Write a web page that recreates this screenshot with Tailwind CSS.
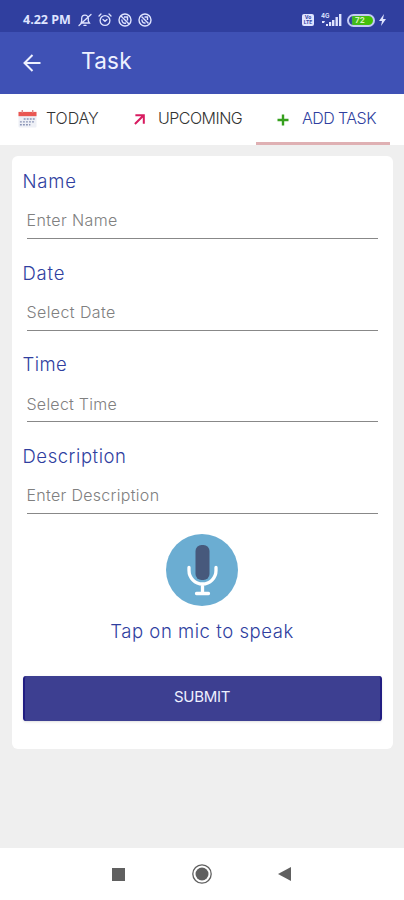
<!DOCTYPE html>
<html lang="en">
<head>
    <meta charset="UTF-8">
    <meta name="viewport" content="width=device-width, initial-scale=1.0">
    <title>Task</title>
    <script src="https://cdn.jsdelivr.net/npm/@tailwindcss/browser@4"></script>
</head>
<body class="bg-[#efefef] h-[900px] flex flex-col overflow-hidden font-['Inter',sans-serif]">

    <!-- Status Bar -->
    <div class="h-8 shrink-0 bg-[#303f9f] pt-2 pl-[23px] pr-[18px] flex items-center justify-between text-[#dfe4ff]">
        <div class="flex items-center gap-[6px]">
            <span class="text-[12.5px] leading-6 font-bold font-['Open_Sans',sans-serif] w-[49px] whitespace-nowrap">4.22 PM</span>
            <svg class="w-[14px] h-[14px]" viewBox="0 0 14 14" fill="none" stroke="currentColor" stroke-width="1.3" stroke-linecap="round">
                <path d="M3 10h8.500l-1.200-2V5.500a3.300 3.300 0 0 0-6.600 0V8zM6 12.400h2M1 12.500L13 1.500"/>
            </svg>
            <svg class="w-[14px] h-[14px]" viewBox="0 0 14 14" fill="none" stroke="currentColor" stroke-width="1.3" stroke-linecap="round">
                <circle cx="7" cy="7.500" r="4.900"/>
                <path d="M1 3l2-2M13 3l-2-2M5 6.500l2 1.800 2-1.800"/>
            </svg>
            <svg class="w-[14px] h-[14px]" viewBox="0 0 14 14" fill="none" stroke="currentColor" stroke-width="1.400">
                <circle cx="7" cy="7" r="6"/>
                <path d="M3 3l8 8M4 6.500a3 3 0 0 0 4 3.500M6 4h3.500v3.500"/>
            </svg>
            <svg class="w-[14px] h-[14px]" viewBox="0 0 14 14" fill="none" stroke="currentColor" stroke-width="1.400">
                <circle cx="7" cy="7" r="6"/>
                <path d="M3.500 3.500l7 7M4 6.500a3 3 0 0 0 3.500 3.500M6.500 4h3v3"/>
            </svg>
        </div>
        <div class="flex items-center">
            <div class="w-3 h-3 mr-[7px] rounded-[2px] bg-[#dfe4ff] text-[#303f9f] text-[5px] leading-[5px] font-bold text-center pt-px">Vo<br>LTE</div>
            <svg class="w-[21px] h-[14px] mr-[5px]" viewBox="0 0 21 14" fill="currentColor">
                <text x="0" y="5" font-size="6" font-weight="700">4G</text>
                <path d="M1 8h3l-1 2H1zM5 11h2v2H5zM8 9h2.200v4H8zM11 7h2.400v6H11zM14.500 4h2.400v9h-2.400zM18 1h2.400v12H18z"/>
            </svg>
            <div class="w-7 h-[13px] mr-[4px] rounded-full border-2 border-[#c3cbf4] bg-gradient-to-r from-[#303f9f] from-10% via-[#43b81b] via-15% to-[#43c400] text-[#d5f5b8] text-[8px] leading-[9px] font-bold pl-[6px]">72</div>
            <svg class="w-[7px] h-[12px]" viewBox="0 0 7 12" fill="currentColor"><path d="M5 0L0 7h3L2 12l5-7H4z"/></svg>
        </div>
    </div>

    <!-- App Bar -->
    <div class="h-[62px] shrink-0 bg-[#3f51b5] pl-[23px] flex items-center text-[#eef1ff]">
        <svg class="w-[18px] h-[18px]" viewBox="0 0 18 18" fill="none" stroke="currentColor" stroke-width="2">
            <path d="M17.500 9H1.500M9.500 1L1.500 9l8 8"/>
        </svg>
        <h1 class="ml-10 -mt-[5px] text-[22.5px] leading-8 tracking-[0.3px]">Task</h1>
    </div>

    <!-- Tabs -->
    <div class="h-[51px] shrink-0 bg-white flex text-[16px] leading-6 font-light text-[#333]">
        <div class="w-[116px] pl-[18px] pt-3 flex">
            <svg class="w-[19px] h-[18px] mt-[4px]" viewBox="0 0 20 19">
                <rect x=".5" y="2" width="19" height="16.500" rx="1" fill="#eef0f6"/>
                <path d="M.5 2h19v4.500H.5z" fill="#ea5752"/>
                <path d="M4.500 0v3M15.500 0v3" stroke="#e08a88" stroke-width="1.500"/>
                <path d="M6 9.500h12M2 12.500h16M2 15.500h11" stroke="#8b95b7" stroke-width="1.500" stroke-dasharray="2 1.200"/>
            </svg>
            <span class="ml-[9px] w-[54px] whitespace-nowrap tracking-[-0.1px]">TODAY</span>
        </div>
        <div class="w-[140px] pl-[18px] pt-3 flex">
            <svg class="w-[11px] h-[11px] mt-[8px]" viewBox="0 0 12 12" fill="none" stroke="#d81b60" stroke-width="2.200">
                <path d="M1 11l9-9M1.500 1.300h9.200V10.500"/>
            </svg>
            <span class="ml-[13px] whitespace-nowrap tracking-[-0.5px]">UPCOMING</span>
        </div>
        <div class="w-[134px] pl-[21px] pt-3 flex border-b-3 border-[#dfb0b3] text-[#303f9f]">
            <svg class="w-3 h-3 mt-2" viewBox="0 0 12 12" stroke="#36a01e" stroke-width="2.400">
                <path d="M6 .5v11M.5 6h11"/>
            </svg>
            <span class="ml-[13px] whitespace-nowrap tracking-[-0.55px]">ADD TASK</span>
        </div>
    </div>

    <!-- Task Form -->
    <form class="mt-[11px] mx-auto w-[381px] h-[593px] shrink-0 bg-white rounded-[6px] px-[11px] pt-[13px]">
        <div class="h-[91.6px]">
            <label for="name" class="block text-[18.5px] leading-6 font-light tracking-[0.8px] text-[#303f9f]">Name</label>
            <input id="name" type="text" placeholder="Enter Name" class="block ml-[4px] mt-[10px] w-[351px] h-[36px] pb-[1px] border-b border-[#888] text-[16px] font-light tracking-[0.4px] placeholder:text-[#808080]">
        </div>
        <div class="h-[91.6px]">
            <label for="date" class="block text-[18.5px] leading-6 font-light tracking-[0.8px] text-[#303f9f]">Date</label>
            <input id="date" type="text" placeholder="Select Date" class="block ml-[4px] mt-[10px] w-[351px] h-[36px] border-b border-[#888] text-[16px] font-light tracking-[0.4px] placeholder:text-[#808080]">
        </div>
        <div class="h-[91.6px]">
            <label for="time" class="block text-[18.5px] leading-6 font-light tracking-[0.4px] text-[#303f9f]">Time</label>
            <input id="time" type="text" placeholder="Select Time" class="block ml-[4px] mt-[10px] w-[351px] h-[36px] border-b border-[#888] text-[16px] font-light tracking-[0.25px] placeholder:text-[#808080]">
        </div>
        <div class="h-[90.2px]">
            <label for="description" class="block text-[18.5px] leading-6 font-light tracking-[0.55px] text-[#303f9f]">Description</label>
            <input id="description" type="text" placeholder="Enter Description" class="block ml-[4px] mt-[10px] w-[351px] h-[36px] border-b border-[#888] text-[16px] font-light tracking-[0.3px] placeholder:text-[#808080]">
        </div>

        <!-- Mic -->
        <svg class="block mx-auto w-[72px] h-[72px]" viewBox="0 0 72 72">
            <circle cx="36" cy="36" r="36" fill="#6badd2"/>
            <rect x="29.500" y="11" width="14" height="35" rx="6" fill="#47597c"/>
            <path d="M23 33.500v3a13.500 13.500 0 0 0 27 0v-3M36.500 50v9.500M30.500 59.500h12" fill="none" stroke="#fff" stroke-width="3.300" stroke-linecap="round"/>
        </svg>
        <p class="mt-[13px] text-center text-[18.5px] leading-6 font-light tracking-[0.55px] text-[#303f9f] whitespace-nowrap">Tap on mic to speak</p>

        <button type="button" class="block mt-[33px] w-full h-[45px] pb-[3px] rounded-[3px] bg-[#3d3f91] border-x-2 border-[#211d82] text-[15px] text-[#eef0ff] tracking-[-0.3px] shadow-sm">SUBMIT</button>
    </form>

    <!-- Navigation Bar -->
    <div class="mt-auto h-[52px] shrink-0 bg-white flex items-center pl-[112px]">
        <div class="w-[13px] h-[13px] bg-[#606060]"></div>
        <svg class="w-5 h-5 ml-[67px]" viewBox="0 0 20 20">
            <circle cx="10" cy="10" r="9.200" fill="none" stroke="#606060" stroke-width="1.300"/>
            <circle cx="10" cy="10" r="6.500" fill="#606060"/>
        </svg>
        <svg class="w-[13px] h-[14px] ml-[66px]" viewBox="0 0 13 14" fill="#606060"><path d="M13 0v14L0 7z"/></svg>
    </div>

</body>
</html>
